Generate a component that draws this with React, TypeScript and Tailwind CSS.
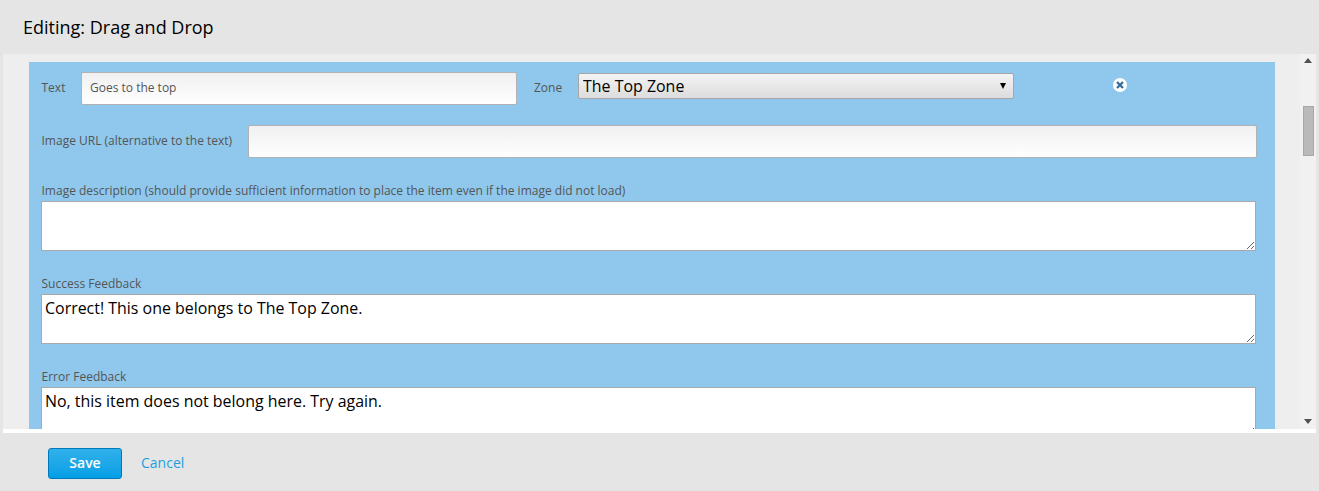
const fontStack = { fontFamily: '"Open Sans", sans-serif' };

const fieldInput =
  "h-[33px] rounded-[2px] border border-[#b2b2b2] bg-gradient-to-b from-[#f0f0f0] to-white px-2 pb-[2px] text-xs text-[#555] outline-none";
const fieldArea =
  "block w-[1215px] resize-y rounded-none border border-[#a9a9a9] bg-white px-[3px] pb-0 pt-[2px] text-[15.95px] leading-[22px] text-black outline-none";

function ScrollBar() {
  return (
    <div className="flex w-4 shrink-0 flex-col items-center justify-between bg-[#f1f1f1] py-[3px]">
      <svg width="8" height="5" viewBox="0 0 8 5" className="mt-[1px]">
        <path d="M4 0 8 5H0Z" fill="#505050" />
      </svg>
      <div className="absolute top-[106px] h-[50px] w-[11px] border border-[#a8a8a8] bg-[#bababa]" />
      <svg width="8" height="5" viewBox="0 0 8 5" className="mb-[2px]">
        <path d="M0 0H8L4 5Z" fill="#505050" />
      </svg>
    </div>
  );
}

function RemoveIcon() {
  return (
    <span className="flex h-[14px] w-[14px] items-center justify-center rounded-full bg-white">
      <svg width="10" height="10" viewBox="0 0 10 10">
        <path d="M2 2 8 8M8 2 2 8" stroke="#2f6a9c" strokeWidth="2.2" />
      </svg>
    </span>
  );
}

export default function App() {
  return (
    <div className="flex h-[491px] w-[1319px] flex-col overflow-hidden bg-[#e5e5e5]" style={fontStack}>
      <div className="flex h-[54px] shrink-0 items-center px-[23px] pb-[1px] text-lg text-black">
        Editing: Drag and Drop
      </div>

      <div className="mx-[3px] h-[379px] shrink-0 bg-white pb-1">
        <div className="flex h-[375px] bg-[#eeeeee]">
          <div className="h-full flex-1 overflow-hidden pl-[26px] pt-2">
            <div className="h-[367px] w-[1246px] overflow-hidden bg-[#8fc8ec] pl-[12.5px] pt-[10px] text-xs text-[#555]">
              <div className="flex h-[33px] items-center">
                <label className="mb-[2px] w-[39.5px]">Text</label>
                <input className={`${fieldInput} w-[436px]`} defaultValue="Goes to the top" />
                <label className="mb-[2px] ml-[17px] w-[44px]">Zone</label>
                <div className="relative -translate-y-[3px]">
                  <select className="h-[26px] w-[436px] appearance-none rounded-[2px] border border-[#a6a6a6] bg-gradient-to-b from-[#f4f4f4] to-[#dcdcdc] pl-1 pt-[1.5px] text-[15.95px] text-black outline-none">
                    <option>The Top Zone</option>
                  </select>
                  <span className="pointer-events-none absolute right-[8px] top-[10px] h-0 w-0 border-x-[3px] border-t-[6px] border-x-transparent border-t-black" />
                </div>
                <div className="ml-[99px] -translate-y-[4px]">
                  <RemoveIcon />
                </div>
              </div>

              <div className="mt-5 flex h-[33px] items-center">
                <label className="mb-[2px] w-[206.5px]">Image URL (alternative to the text)</label>
                <input className={`${fieldInput} w-[1009px]`} />
              </div>

              <label className="mt-6 block leading-[17px]">
                Image description (should provide sufficient information to place the item even if the image did not load)
              </label>
              <textarea className={`${fieldArea} -ml-[0.5px] mt-[2px] h-[50px]`} />

              <label className="mt-6 block leading-[17px]">Success Feedback</label>
              <textarea
                className={`${fieldArea} -ml-[0.5px] mt-[2px] h-[50px]`}
                defaultValue="Correct! This one belongs to The Top Zone."
              />

              <label className="mt-6 block leading-[17px]">Error Feedback</label>
              <textarea
                className={`${fieldArea} -ml-[0.5px] mt-[2px] h-[50px]`}
                defaultValue="No, this item does not belong here. Try again."
              />
            </div>
          </div>
          <ScrollBar />
        </div>
      </div>

      <div className="flex flex-1 items-center pl-[48px] pt-[3px]">
        <button className="h-[31px] w-[74px] rounded-[3px] border border-[#0079bc] bg-gradient-to-b from-[#2fb0ea] to-[#009fe6] pb-[1px] text-sm font-semibold text-white">
          Save
        </button>
        <a className="mb-[1px] ml-[19px] text-sm text-[#1d9fdf]">Cancel</a>
      </div>
    </div>
  );
}
